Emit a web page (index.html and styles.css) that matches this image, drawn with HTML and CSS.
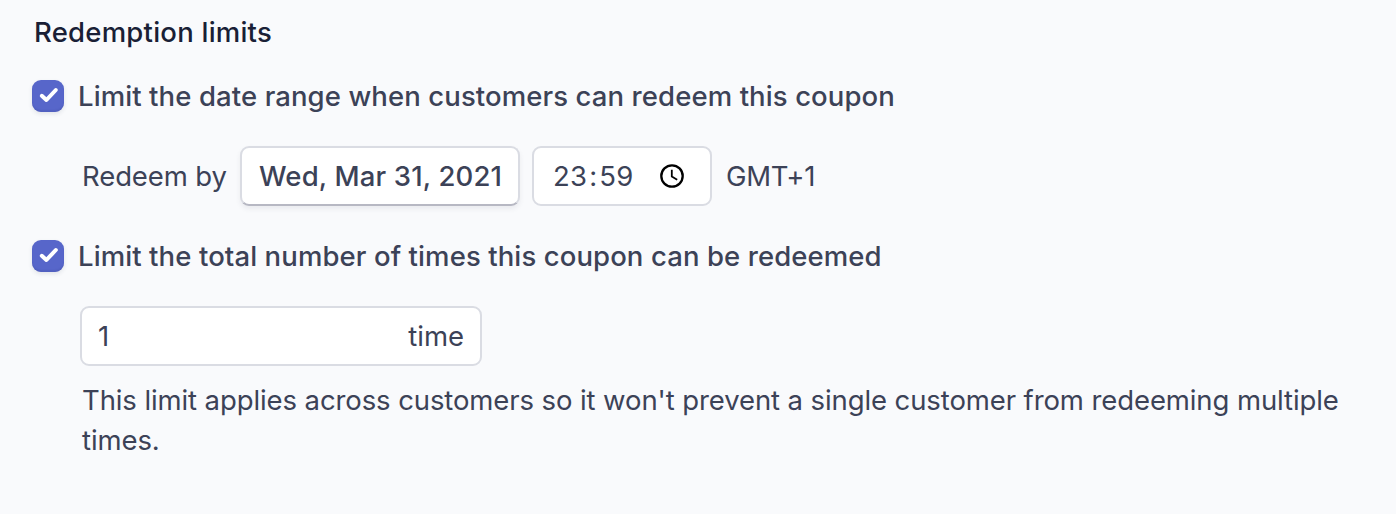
FILE: index.html
```html
<!DOCTYPE html>
<html lang="en">
<head>
<meta charset="utf-8">
<title>Redemption limits</title>
<link rel="stylesheet" href="styles.css">
</head>
<body>
<form class="limits">
  <h2 class="title">Redemption limits</h2>
  <div class="option">
    <span class="check"><svg viewBox="0 0 32 32"><path d="M9.8 15.8 14.4 20 23.8 10"/></svg></span>
    <span class="label">Limit the date range when customers can redeem this coupon</span>
  </div>
  <div class="redeem">
    <span class="by">Redeem by</span>
    <span class="date">Wed, Mar 31, 2021</span>
    <span class="time"><span class="clock"><span>23</span><span>:</span><span>59</span></span><svg viewBox="0 0 24 24"><circle cx="12" cy="12" r="10.7"/><path d="M11.8 5.8v6.7l5.4 3.2"/></svg></span>
    <span class="zone">GMT+1</span>
  </div>
  <div class="option">
    <span class="check"><svg viewBox="0 0 32 32"><path d="M9.8 15.8 14.4 20 23.8 10"/></svg></span>
    <span class="label">Limit the total number of times this coupon can be redeemed</span>
  </div>
  <div class="count"><span>1</span><span class="unit">time</span></div>
  <p class="help">This limit applies across customers so it won't prevent a single customer from redeeming multiple<br>times.</p>
</form>
</body>
</html>
```
FILE: styles.css
```css
* { box-sizing: border-box; }
body { margin: 0; height: 514px; overflow: hidden; background: #f9fafc; color: #3c4257; font: 400 27.5px/40px Inter, sans-serif; letter-spacing: -0.1px; white-space: nowrap; }
.limits { padding: 12px 32px 0; }
.title { margin: 0 0 24px 2px; color: #1a1f36; font: inherit; font-weight: 500; letter-spacing: 0.23px; }
.option { display: flex; align-items: center; gap: 14px; height: 40px; }
.label { font-weight: 500; letter-spacing: 0.1px; }
.check { width: 32px; height: 32px; border-radius: 9px; background: #5766ca; box-shadow: inset 0 -2px 1px #4c59b680, 0 2px 4px #3c42571f; }
.check svg { display: block; fill: none; stroke: #fff; stroke-width: 4; stroke-linecap: round; stroke-linejoin: round; }
.redeem { display: flex; align-items: center; height: 60px; margin: 30px 0 30px 50px; }
.by { width: 144px; }
.date, .time, .count { display: flex; align-items: center; height: 60px; background: #fff; border: 2px solid #dadce3; border-radius: 9px; }
.date { width: 280px; margin-left: 14px; padding-left: 17px; font-weight: 500; letter-spacing: 0.15px; border-bottom-color: #b7b8c3; box-shadow: 0 3px 5px #3c425714; }
.time { width: 180px; margin: 0 14px 0 12px; padding: 0 26px 0 19px; justify-content: space-between; }
.clock { display: flex; gap: 2px; letter-spacing: 0.2px; }
.time svg { width: 24px; height: 24px; fill: none; stroke: #000; stroke-width: 2.3; }
.time path { stroke-width: 1.8; }
.zone { letter-spacing: -0.25px; }
.count { width: 402px; margin: 30px 0 0 48px; padding: 0 16px; justify-content: space-between; }
.unit { letter-spacing: 0; }
.help { margin: 14px 0 0 50px; }
```
